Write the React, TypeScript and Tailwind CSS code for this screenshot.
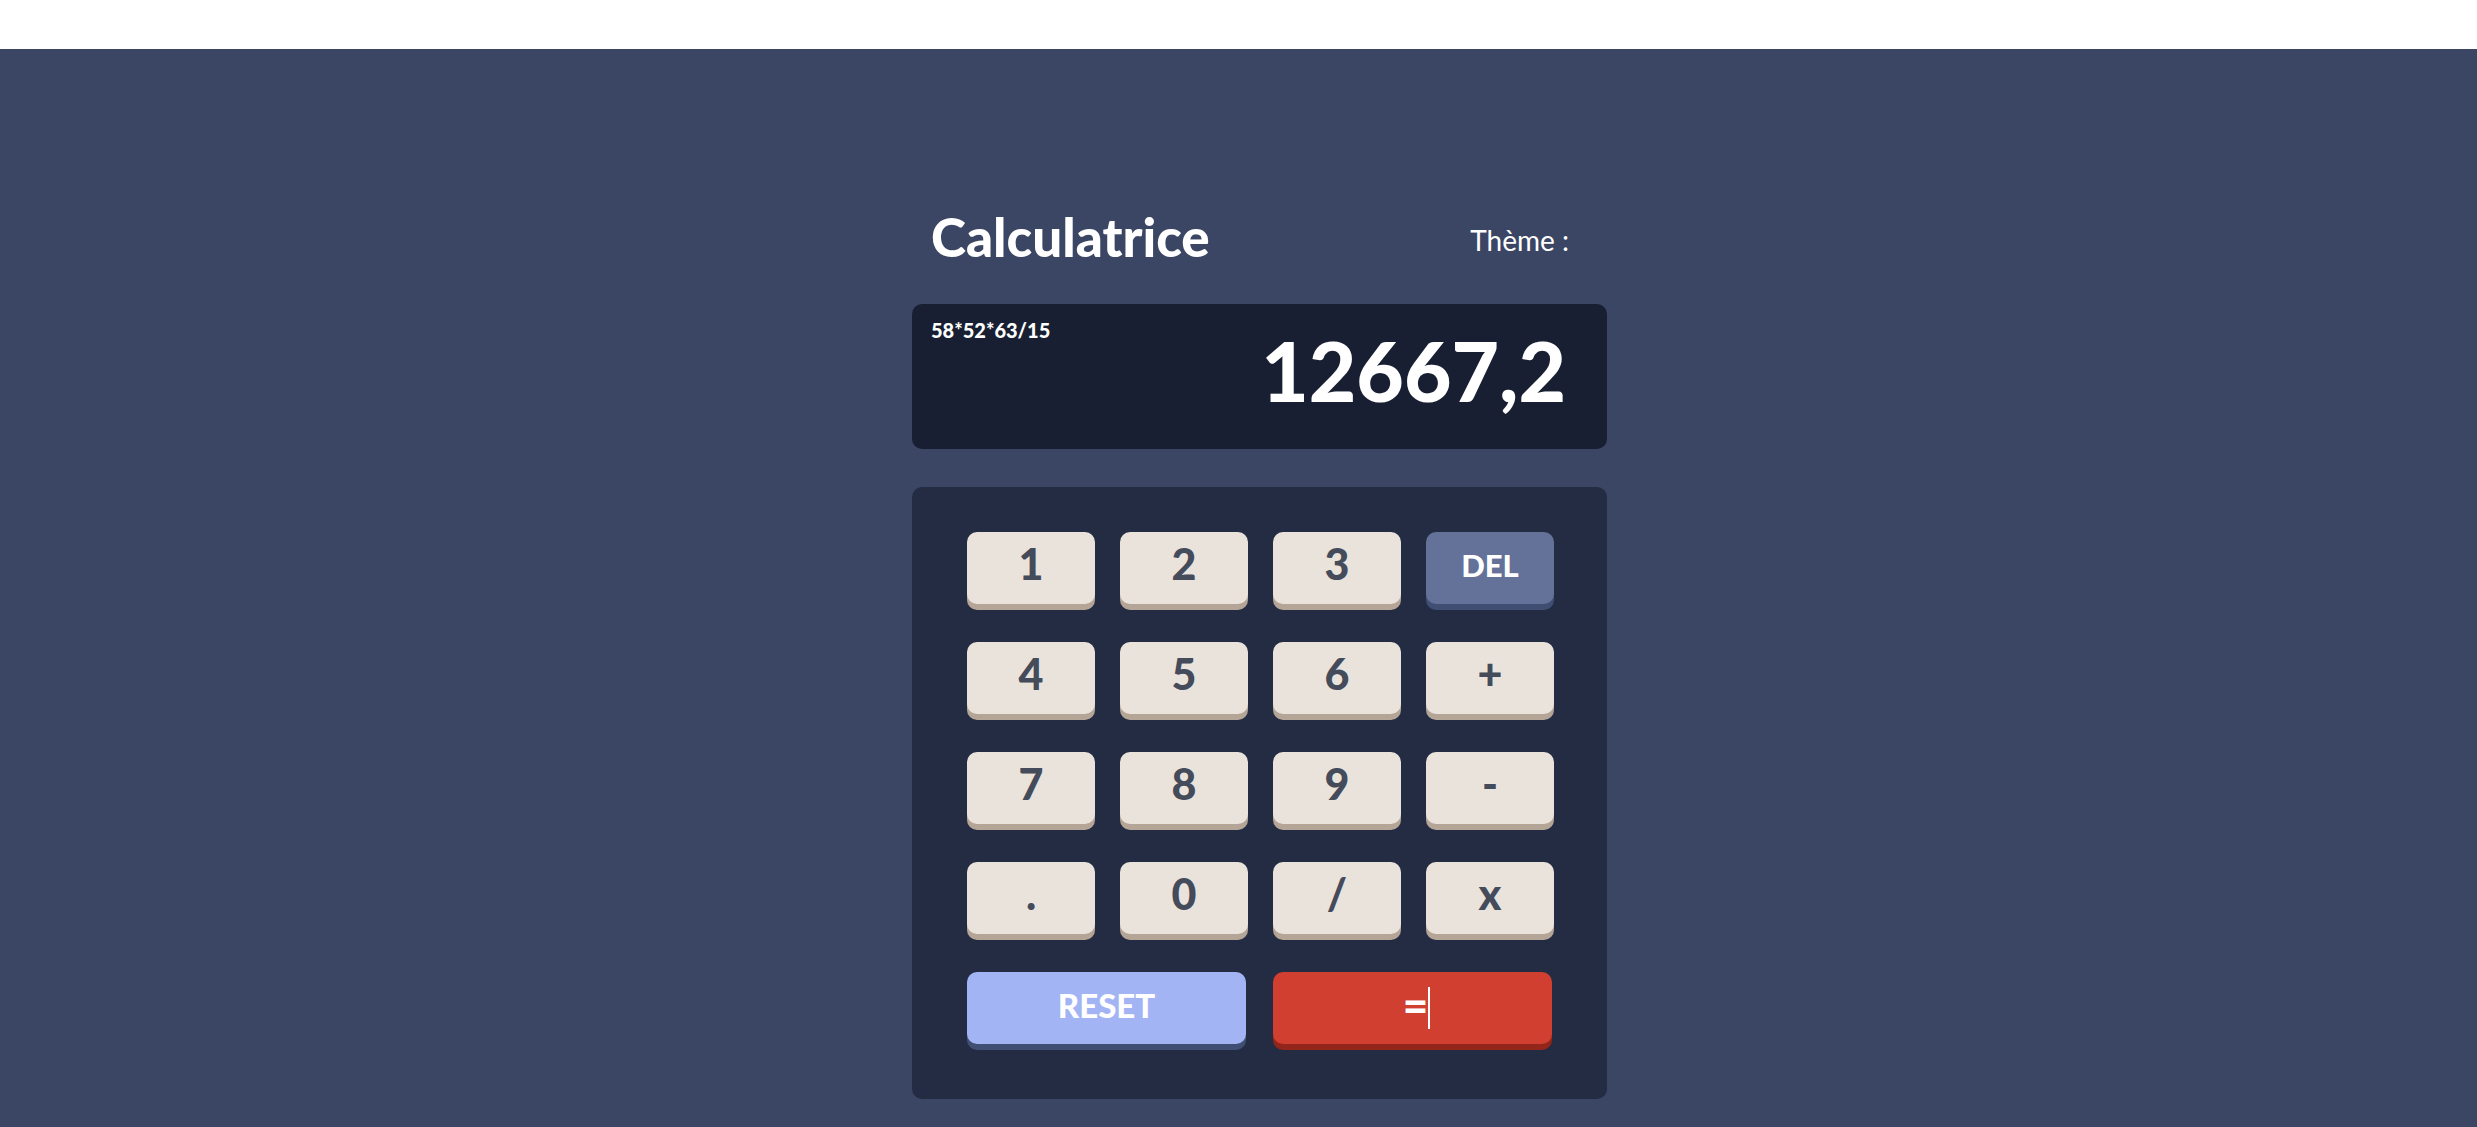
import React from 'react';

type Key = {
    label: string;
    kind?: 'num' | 'del';
};

const keys: Key[] = [
    { label: '1' }, { label: '2' }, { label: '3' }, { label: 'DEL', kind: 'del' },
    { label: '4' }, { label: '5' }, { label: '6' }, { label: '+' },
    { label: '7' }, { label: '8' }, { label: '9' }, { label: '-' },
    { label: '.' }, { label: '0' }, { label: '/' }, { label: 'x' },
];

function KeyButton({ label, kind = 'num' }: Key) {
    if (kind === 'del') {
        return (
            <button className="h-[72px] rounded-[10px] bg-[#647198] shadow-[0_6px_0_#414e73] flex items-center justify-center pb-[6px] text-[31px] font-black leading-none text-white">
                {label}
            </button>
        );
    }
    return (
        <button className="h-[72px] rounded-[10px] bg-[#eae3dc] shadow-[0_6px_0_#b4a597] flex items-center justify-center pb-[10px] text-[43px] font-black leading-none text-[#444b5a]">
            {label}
        </button>
    );
}

export default function App() {
    return (
        <div className="min-h-screen bg-white" style={{ fontFamily: 'Lato, "Open Sans", sans-serif' }}>
            <div className="h-[49px] bg-white" />
            <main className="min-h-[1078px] bg-[#3a4663] flex justify-center pl-[42px] pt-[161px]">
                <div className="w-[695px] flex flex-col">
                    {/* header */}
                    <div className="flex items-center justify-between pl-[19px] pr-[38px]">
                        <h1 className="text-[53px] font-black leading-none text-white">Calculatrice</h1>
                        <span className="mt-[6px] text-[28px] leading-none text-white">Thème :</span>
                    </div>

                    {/* screen */}
                    <div className="mt-[41px] h-[145px] rounded-[10px] bg-[#181f32] flex items-start justify-between pl-[19px] pr-[41px] pt-[16px]">
                        <span className="text-[20px] font-black leading-none text-white">58*52*63/15</span>
                        <span className="mt-[9px] text-[82px] font-black leading-none text-white">12667,2</span>
                    </div>

                    {/* keypad */}
                    <div className="mt-[38px] rounded-[10px] bg-[#232c43] pl-[55px] pr-[53px] pt-[45px] pb-[55px]">
                        <div className="grid grid-cols-4 gap-x-[25px] gap-y-[38px]">
                            {keys.map((k) => (
                                <KeyButton key={k.label} {...k} />
                            ))}
                            <button className="col-span-2 mr-[2px] h-[72px] rounded-[10px] bg-[#a3b4f5] shadow-[0_6px_0_#414e73] flex items-center justify-center pb-[6px] text-[33px] font-black leading-none text-white">
                                RESET
                            </button>
                            <button className="col-span-2 mr-[2px] h-[72px] rounded-[10px] bg-[#d03f2f] shadow-[0_6px_0_#93261a] flex items-center justify-center pb-[6px] text-[44px] font-black leading-none text-white">
                                <span className="ml-[8px]">=</span>
                                <span className="mt-[6px] h-[42px] w-[2px] bg-white" />
                            </button>
                        </div>
                    </div>
                </div>
            </main>
        </div>
    );
}
